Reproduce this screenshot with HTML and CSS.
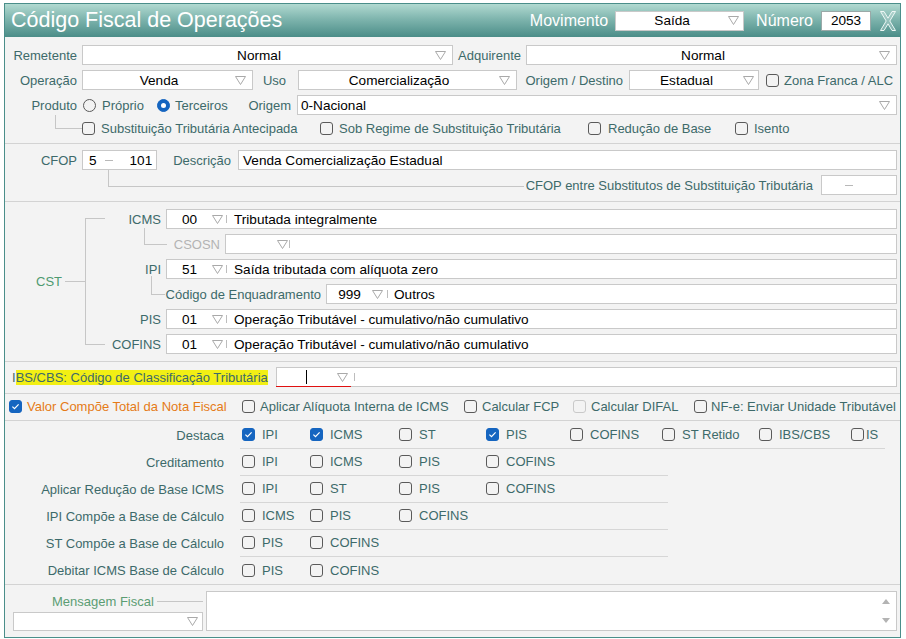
FILE: index.html
```html
<!DOCTYPE html>
<html lang="pt-BR">
<head>
<meta charset="utf-8">
<title>Código Fiscal de Operações</title>
<link rel="stylesheet" href="styles.css">
</head>
<body>
<div class="win">
  <div class="hdr">
    <div class="title">Código Fiscal de Operações</div>
    <span class="hlbl">Movimento</span>
    <div class="sel hsel"><span class="sv">Saída</span><svg class="arr" viewBox="0 0 11 9"><path d="M0.5 0.5H10.5L5.5 8.5Z"/></svg></div>
    <span class="hlbl hnuml">Número</span>
    <div class="hnum">2053</div>
    <svg class="close" viewBox="0 0 16 20"><polygon points="0.5,0.5 4,0.5 8,7.2 12,0.5 15.5,0.5 9.8,10 15.5,19.5 12,19.5 8,12.8 4,19.5 0.5,19.5 6.2,10"/></svg>
  </div>

  <div class="sec s1">
    <div class="row">
      <span class="lbl w72">Remetente</span>
      <div class="sel w371 ml5"><span class="sv">Normal</span><svg class="arr" viewBox="0 0 11 9"><path d="M0.5 0.5H10.5L5.5 8.5Z"/></svg></div>
      <span class="lbl w68">Adquirente</span>
      <div class="sel w371 ml5"><span class="sv">Normal</span><svg class="arr" viewBox="0 0 11 9"><path d="M0.5 0.5H10.5L5.5 8.5Z"/></svg></div>
    </div>
    <div class="row">
      <span class="lbl w72">Operação</span>
      <div class="sel w171 ml5"><span class="sv">Venda</span><svg class="arr" viewBox="0 0 11 9"><path d="M0.5 0.5H10.5L5.5 8.5Z"/></svg></div>
      <span class="lbl w33">Uso</span>
      <div class="sel w219 ml12"><span class="sv">Comercialização</span><svg class="arr" viewBox="0 0 11 9"><path d="M0.5 0.5H10.5L5.5 8.5Z"/></svg></div>
      <span class="lbl w106">Origem / Destino</span>
      <div class="sel w130 ml6"><span class="sv">Estadual</span><svg class="arr a4" viewBox="0 0 11 9"><path d="M0.5 0.5H10.5L5.5 8.5Z"/></svg></div>
      <div class="ci zona"><span class="cb"></span><span>Zona Franca / ALC</span></div>
    </div>
    <div class="row">
      <span class="lbl w72">Produto</span>
      <div class="radios">
        <span class="rb"></span><span class="rl">Próprio</span>
        <span class="rb on rb2"></span><span class="rl rl2">Terceiros</span>
      </div>
      <span class="lbl w51">Origem</span>
      <div class="box w600 ml6"><span class="tl t3">0-Nacional</span><svg class="arr" viewBox="0 0 11 9"><path d="M0.5 0.5H10.5L5.5 8.5Z"/></svg></div>
    </div>
    <div class="row rD">
      <span class="conn cProd"></span>
      <div class="ci g6 w238"><span class="cb"></span><span>Substituição Tributária Antecipada</span></div>
      <div class="ci g6 w268"><span class="cb"></span><span>Sob Regime de Substituição Tributária</span></div>
      <div class="ci g7 w147"><span class="cb"></span><span>Redução de Base</span></div>
      <div class="ci g6"><span class="cb"></span><span>Isento</span></div>
    </div>
  </div>

  <div class="sec s2">
    <div class="row">
      <span class="lbl w72">CFOP</span>
      <div class="box cfop ml5"><span>5</span><span class="dash"></span><span class="c101">101</span></div>
      <span class="lbl w74">Descrição</span>
      <div class="box w659 ml7"><span class="tl t4">Venda Comercialização Estadual</span></div>
    </div>
    <div class="row r2">
      <span class="conn cCfop"></span>
      <span class="lbl">CFOP entre Substitutos de Substituição Tributária</span>
      <div class="box cfop2 ml8"><span class="dash d0"></span></div>
    </div>
  </div>

  <div class="sec s3">
    <div class="cstl">
      <span class="cstlbl">CST</span><span class="cstline"></span><span class="bracket"></span>
    </div>
    <div class="cstrows">
      <div class="row">
        <span class="lbl w56">ICMS</span>
        <div class="box w731 ml5"><span class="code w45">00</span><svg class="arr inl" viewBox="0 0 11 9"><path d="M0.5 0.5H10.5L5.5 8.5Z"/></svg><span class="bar b3"></span><span class="txt t7">Tributada integralmente</span></div>
      </div>
      <div class="row">
        <span class="conn cCsosn"></span>
        <span class="lbl w53 dim">CSOSN</span>
        <div class="box w672 ml5"><span class="code w51"></span><svg class="arr inl" viewBox="0 0 11 9"><path d="M0.5 0.5H10.5L5.5 8.5Z"/></svg><span class="bar b1"></span></div>
      </div>
      <div class="row">
        <span class="lbl w56">IPI</span>
        <div class="box w731 ml5"><span class="code w45">51</span><svg class="arr inl" viewBox="0 0 11 9"><path d="M0.5 0.5H10.5L5.5 8.5Z"/></svg><span class="bar b3"></span><span class="txt t7">Saída tributada com alíquota zero</span></div>
      </div>
      <div class="row">
        <span class="conn cEnq"></span>
        <span class="lbl w156">Código de Enquadramento</span>
        <div class="box w571 ml5"><span class="code w45">999</span><svg class="arr inl" viewBox="0 0 11 9"><path d="M0.5 0.5H10.5L5.5 8.5Z"/></svg><span class="bar b4"></span><span class="txt t6">Outros</span></div>
      </div>
      <div class="row">
        <span class="lbl w56">PIS</span>
        <div class="box w731 ml5"><span class="code w45">01</span><svg class="arr inl" viewBox="0 0 11 9"><path d="M0.5 0.5H10.5L5.5 8.5Z"/></svg><span class="bar b3"></span><span class="txt t7">Operação Tributável - cumulativo/não cumulativo</span></div>
      </div>
      <div class="row">
        <span class="lbl w56">COFINS</span>
        <div class="box w731 ml5"><span class="code w45">01</span><svg class="arr inl" viewBox="0 0 11 9"><path d="M0.5 0.5H10.5L5.5 8.5Z"/></svg><span class="bar b3"></span><span class="txt t7">Operação Tributável - cumulativo/não cumulativo</span></div>
      </div>
    </div>
  </div>

  <div class="sec s4">
    <div class="row">
      <span class="lbl ibslbl">I<span class="hl">BS/CBS: Código de Classificação Tributária</span></span>
      <div class="box ibsbox">
        <span class="ibscode"><span class="caret"></span><svg class="arr inl ibsarr" viewBox="0 0 11 9"><path d="M0.5 0.5H10.5L5.5 8.5Z"/></svg></span><span class="bar b3"></span>
      </div>
    </div>
  </div>

  <div class="sec s5">
    <div class="ci w233 first"><span class="cb on"><svg viewBox="0 0 13 13"><path d="M3.4 6.6L5.5 8.6L9.6 4.3"/></svg></span><span class="orange">Valor Compõe Total da Nota Fiscal</span></div>
    <div class="ci w222"><span class="cb"></span><span>Aplicar Alíquota Interna de ICMS</span></div>
    <div class="ci w109"><span class="cb"></span><span>Calcular FCP</span></div>
    <div class="ci w121"><span class="cb dis"></span><span>Calcular DIFAL</span></div>
    <div class="ci g4"><span class="cb"></span><span>NF-e: Enviar Unidade Tributável</span></div>
  </div>

  <div class="sec s6">
    <div class="grow">
      <div class="glbl">Destaca</div>
      <div class="gcells wide">
        <div class="gc"><span class="cb on"><svg viewBox="0 0 13 13"><path d="M3.4 6.6L5.5 8.6L9.6 4.3"/></svg></span><span>IPI</span></div>
        <div class="gc"><span class="cb on"><svg viewBox="0 0 13 13"><path d="M3.4 6.6L5.5 8.6L9.6 4.3"/></svg></span><span>ICMS</span></div>
        <div class="gc"><span class="cb"></span><span>ST</span></div>
        <div class="gc"><span class="cb on"><svg viewBox="0 0 13 13"><path d="M3.4 6.6L5.5 8.6L9.6 4.3"/></svg></span><span>PIS</span></div>
        <div class="gc"><span class="cb"></span><span>COFINS</span></div>
        <div class="gc"><span class="cb"></span><span>ST Retido</span></div>
        <div class="gc"><span class="cb"></span><span>IBS/CBS</span></div>
        <div class="gc is"><span class="cb"></span><span>IS</span></div>
      </div>
    </div>
    <div class="grow">
      <div class="glbl">Creditamento</div>
      <div class="gcells">
        <div class="gc"><span class="cb"></span><span>IPI</span></div>
        <div class="gc"><span class="cb"></span><span>ICMS</span></div>
        <div class="gc"><span class="cb"></span><span>PIS</span></div>
        <div class="gc"><span class="cb"></span><span>COFINS</span></div>
      </div>
    </div>
    <div class="grow">
      <div class="glbl">Aplicar Redução de Base ICMS</div>
      <div class="gcells">
        <div class="gc"><span class="cb"></span><span>IPI</span></div>
        <div class="gc"><span class="cb"></span><span>ST</span></div>
        <div class="gc"><span class="cb"></span><span>PIS</span></div>
        <div class="gc"><span class="cb"></span><span>COFINS</span></div>
      </div>
    </div>
    <div class="grow">
      <div class="glbl">IPI Compõe a Base de Cálculo</div>
      <div class="gcells">
        <div class="gc"><span class="cb"></span><span>ICMS</span></div>
        <div class="gc"><span class="cb"></span><span>PIS</span></div>
        <div class="gc"><span class="cb"></span><span>COFINS</span></div>
      </div>
    </div>
    <div class="grow">
      <div class="glbl">ST Compõe a Base de Cálculo</div>
      <div class="gcells">
        <div class="gc"><span class="cb"></span><span>PIS</span></div>
        <div class="gc"><span class="cb"></span><span>COFINS</span></div>
      </div>
    </div>
    <div class="grow">
      <div class="glbl">Debitar ICMS Base de Cálculo</div>
      <div class="gcells last">
        <div class="gc"><span class="cb"></span><span>PIS</span></div>
        <div class="gc"><span class="cb"></span><span>COFINS</span></div>
      </div>
    </div>
  </div>

  <div class="s7">
    <div class="mleft">
      <div class="mlrow"><span class="mlbl">Mensagem Fiscal</span><span class="mline"></span></div>
      <div class="sel msel"><span class="sv"></span><svg class="arr a4" viewBox="0 0 11 9"><path d="M0.5 0.5H10.5L5.5 8.5Z"/></svg></div>
    </div>
    <div class="mtext">
      <div class="scr">
        <svg class="tri" viewBox="0 0 8 5"><path d="M0 5L4 0L8 5Z"/></svg>
        <svg class="tri" viewBox="0 0 8 5"><path d="M0 0L8 0L4 5Z"/></svg>
      </div>
    </div>
  </div>
</div>
</body>
</html>
```

FILE: styles.css
```css
* { box-sizing: border-box; }
html, body { margin: 0; padding: 0; }
body {
  background: #ffffff;
  font-family: "Liberation Sans", Arial, sans-serif;
  font-size: 13px;
  color: #3d6a6a;
}

.win {
  margin: 3px 0 0 4px;
  width: 897px;
  height: 635px;
  border: 1px solid #4a8e8a;
  background: #f3f3f3;
  display: flex;
  flex-direction: column;
  overflow: hidden;
}

/* header */
.hdr {
  flex: none;
  height: 33px;
  display: flex;
  align-items: center;
  padding: 0 4px 0 6px;
  background: linear-gradient(to bottom, #b1dad1 0%, #7fb5ae 45%, #4b8d88 100%);
}
.title { flex: 1; color: #ffffff; font-size: 21.5px; white-space: nowrap; }
.hlbl { color: #ffffff; font-size: 16px; white-space: nowrap; }
.hsel { width: 129px; margin-left: 7px; border-color: #b8c8c6; }
.hsel .arr { margin-right: 4px; }
.hnuml { margin-left: 12px; }
.hnum {
  margin-left: 8px;
  width: 50px;
  height: 20px;
  background: #ffffff;
  border: 1px solid #9aa9a8;
  color: #000;
  font-size: 13.6px;
  display: flex;
  align-items: center;
  justify-content: center;
}
.close { margin-left: 9px; width: 16px; height: 20px; flex: none; }
.close polygon { fill: rgba(255,255,255,0.22); stroke: #eef7f5; stroke-width: 1; stroke-linejoin: miter; }

/* generic */
.sec { flex: none; border-bottom: 1px solid #d3d3d3; }
.row { display: flex; align-items: center; height: 20px; flex: none; padding-right: 3px; }
.lbl { flex: none; text-align: right; white-space: nowrap; }
.box, .sel {
  flex: none;
  display: flex;
  align-items: center;
  height: 20px;
  background: #ffffff;
  border: 1px solid #c9c9c9;
  color: #000;
  font-size: 13.6px;
  white-space: nowrap;
}
.sv { flex: 1; text-align: center; }
.tl { flex: 1; }
.t3 { padding-left: 3px; }
.t4 { padding-left: 4px; }
.arr { flex: none; width: 11px; height: 9px; margin-right: 6px; }
.arr.a4 { margin-right: 4px; }
.arr.inl { margin-right: 0; }
.arr path { fill: none; stroke: #a9a9a9; stroke-width: 1; }

.w33 { width: 33px; } .w51 { width: 51px; } .w53 { width: 53px; } .w56 { width: 56px; }
.w68 { width: 68px; } .w72 { width: 72px; } .w74 { width: 74px; } .w106 { width: 106px; }
.w130 { width: 130px; }
.w156 { width: 156px; } .w171 { width: 171px; } .w219 { width: 219px; }
.w371 { width: 371px; } .w571 { width: 571px; } .w600 { width: 600px; } .w659 { width: 659px; }
.w672 { width: 672px; } .w731 { width: 731px; }
.ml5 { margin-left: 5px; } .ml6 { margin-left: 6px; } .ml7 { margin-left: 7px; }
.ml8 { margin-left: 8px; } .ml12 { margin-left: 12px; }

/* checkbox & radio */
.ci { display: flex; align-items: center; gap: 5px; flex: none; white-space: nowrap; }
.g4 { gap: 4px; } .g6 { gap: 6px; } .g7 { gap: 7px; }
.cb {
  flex: none;
  width: 13px;
  height: 13px;
  border: 1px solid #5a5a5a;
  border-radius: 3px;
  display: flex;
  align-items: center;
  justify-content: center;
}
.cb.on { background: #1565c0; border-color: #1565c0; }
.cb.dis { border-color: #c9c9c9; }
.cb svg { width: 13px; height: 13px; flex: none; }
.cb svg path { fill: none; stroke: #ffffff; stroke-width: 1.2; }
.rb {
  flex: none;
  width: 13px;
  height: 13px;
  border: 1px solid #5a5a5a;
  border-radius: 50%;
  display: flex;
  align-items: center;
  justify-content: center;
}
.rb.on { background: #1565c0; border-color: #1565c0; }
.rb.on::after { content: ""; width: 5px; height: 5px; border-radius: 50%; background: #fff; }
.radios { width: 163px; display: flex; align-items: center; padding-left: 6px; flex: none; }
.rl { margin-left: 6px; }
.rb2 { margin-left: 13px; }
.rl2 { margin-left: 5px; }

.conn { flex: none; align-self: flex-start; border-left: 1px solid #c6c6c6; border-bottom: 1px solid #c6c6c6; }

/* section 1 */
.s1 { height: 107px; padding-top: 8px; }
.s1 .row + .row { margin-top: 5px; }
.s1 .row.rD { margin-top: 3px; }
.zona { margin-left: 7px; }
.cProd { margin-left: 50px; width: 27px; margin-top: -3px; height: 14px; }
.w238 { width: 238px; } .w268 { width: 268px; } .w147 { width: 147px; }

/* section 2 */
.s2 { height: 58px; padding-top: 6px; }
.s2 .row + .row { margin-top: 5px; }
.cfop { width: 75px; padding-left: 6px; }
.dash { flex: none; width: 8px; height: 1px; background: #b8b8b8; margin-left: 8px; }
.dash.d0 { margin-left: 0; }
.c101 { margin-left: 17px; }
.cCfop { margin-left: 103px; flex: 1; margin-top: -5px; height: 17px; margin-right: 2px; }
.cfop2 { width: 76px; padding-left: 23px; }

/* section 3 */
.s3 { height: 160px; padding: 7px 0; display: flex; }
.cstl { flex: none; width: 100px; height: 145px; display: flex; align-items: center; }
.cstlbl { margin-left: 31px; color: #4e9a70; }
.cstline { margin-left: 3px; width: 20px; height: 1px; background: #c6c6c6; flex: none; }
.bracket { width: 20px; height: 127px; border: 1px solid #c6c6c6; border-right: none; flex: none; }
.cstrows { display: flex; flex-direction: column; gap: 5px; flex: 1; }
.code { flex: none; text-align: center; }
.w45 { width: 45px; }
.bar { flex: none; width: 1px; height: 8px; background: #bdbdbd; }
.b1 { margin-left: 1px; } .b3 { margin-left: 3px; } .b4 { margin-left: 4px; }
.txt { flex: 1; }
.t6 { margin-left: 6px; } .t7 { margin-left: 7px; }
.dim { color: #b3b3b3; }
.cCsosn { margin-left: 39px; width: 23px; margin-top: -6px; height: 17px; }
.cEnq { margin-left: 46px; width: 14px; margin-top: -8px; height: 19px; }

/* section 4 */
.s4 { height: 32px; padding-top: 5px; }
.ibslbl { margin-left: 7px; text-align: left; }
.hl { background: #f2ef14; }
.ibsbox { margin-left: auto; width: 621px; }
.ibscode {
  flex: none;
  align-self: stretch;
  width: 75px;
  margin-left: -1px;
  margin-bottom: -1px;
  border-bottom: 1px solid #e01010;
  display: flex;
  align-items: center;
}
.caret { flex: none; width: 1px; height: 14px; background: #000; margin-left: 30px; }
.ibsarr { margin-left: 30px; }

/* section 5 */
.s5 { height: 27px; display: flex; align-items: center; padding-bottom: 1px; }
.first { margin-left: 4px; }
.w233 { width: 233px; } .w222 { width: 222px; } .w109 { width: 109px; } .w121 { width: 121px; }
.orange { color: #e57b17; }

/* section 6 */
.s6 { height: 164px; padding-top: 1px; }
.grow { display: flex; height: 27px; }
.glbl {
  flex: none;
  width: 219px;
  height: 26px;
  display: flex;
  align-items: center;
  justify-content: flex-end;
  white-space: nowrap;
}
.gcells {
  flex: none;
  margin-left: 16px;
  padding-left: 2px;
  width: 428px;
  height: 27px;
  display: flex;
  align-items: center;
  padding-bottom: 1px;
  border-bottom: 1px solid #d6d6d6;
}
.gcells.wide { width: 645px; }
.gcells.last { border-bottom: none; }
.gc { flex: none; display: flex; align-items: center; gap: 7px; white-space: nowrap; }
.gc:nth-child(1) { width: 68px; }
.gc:nth-child(2) { width: 89px; }
.gc:nth-child(3) { width: 87px; }
.gc:nth-child(4) { width: 84px; }
.gc:nth-child(5) { width: 92px; }
.gc:nth-child(6) { width: 97px; }
.gc:nth-child(7) { width: 92px; }
.gc.is { width: auto; gap: 2px; }

/* section 7 */
.s7 { flex: 1; display: flex; padding-top: 6px; }
.mleft { flex: none; margin-left: 8px; width: 190px; }
.mlrow { height: 20px; display: flex; align-items: center; padding-left: 39px; }
.mlbl { color: #5b9d73; white-space: nowrap; }
.mline { flex: 1; height: 1px; background: #c6c6c6; margin-left: 3px; }
.msel { width: 190px; height: 19px; margin-top: 1px; }
.mtext {
  flex: none;
  margin-left: 3px;
  width: 691px;
  height: 40px;
  background: #ffffff;
  border: 1px solid #c9c9c9;
  display: flex;
  justify-content: flex-end;
}
.scr { display: flex; flex-direction: column; justify-content: space-between; padding: 7px 6px 7px 0; }
.tri { width: 8px; height: 5px; display: block; }
.tri path { fill: #b3b3b3; }
```
